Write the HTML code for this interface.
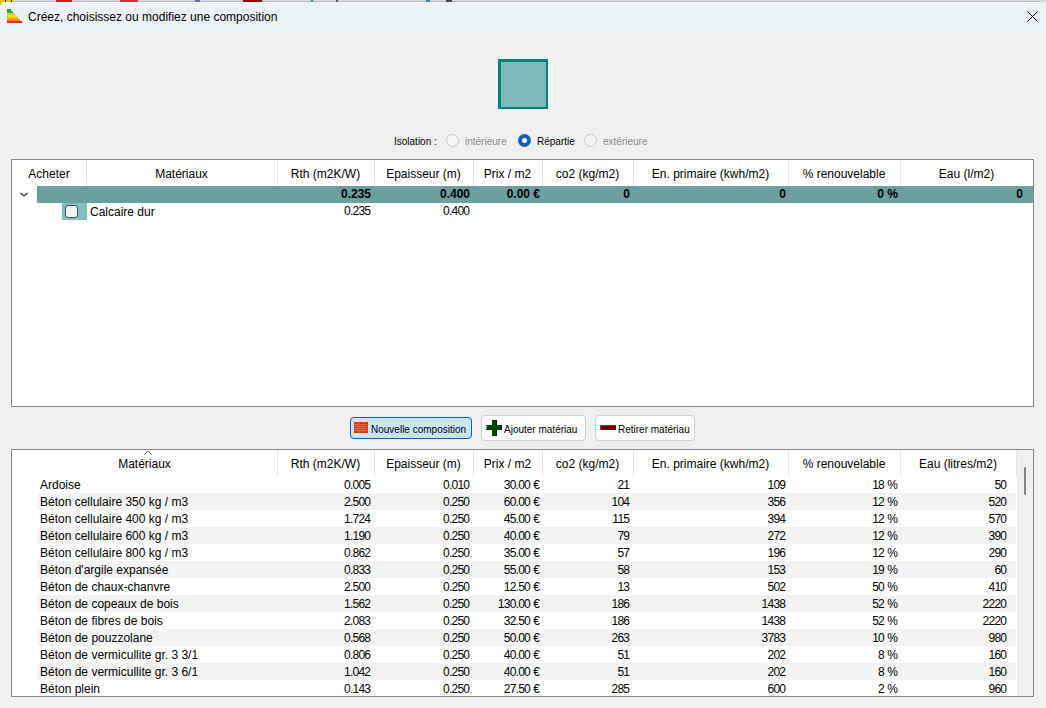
<!DOCTYPE html>
<html><head><meta charset="utf-8">
<style>
html,body{margin:0;padding:0;}
body{width:1046px;height:708px;overflow:hidden;position:relative;background:#f0f0f0;font-family:"Liberation Sans",sans-serif;font-size:12px;color:#000;}
.a{position:absolute;}
.t{position:absolute;white-space:nowrap;}
.r{text-align:right;}
.c{text-align:center;}
.b{font-weight:bold;}
.n{letter-spacing:-0.75px;}
.sm{font-size:10px;}
.dis{color:#8a8a8a;}
.bt{}
.sep{position:absolute;width:1px;background:#e5e5e5;}
</style></head><body>

<div class="a" style="left:0;top:0;width:1046px;height:2px;background:#d9d9d9"></div>
<div class="a" style="left:0;top:1px;width:1040px;height:1px;background:#b9b9b9"></div>
<div class="a" style="left:0px;top:0;width:13px;height:2px;background:#e8c200"></div>
<div class="a" style="left:5px;top:0;width:1px;height:2px;background:#222"></div>
<div class="a" style="left:11px;top:0;width:1px;height:2px;background:#333"></div>
<div class="a" style="left:56px;top:0;width:16px;height:2px;background:#d42020"></div>
<div class="a" style="left:120px;top:0;width:18px;height:2px;background:#d83030"></div>
<div class="a" style="left:195px;top:0;width:5px;height:2px;background:#5a6fb8"></div>
<div class="a" style="left:243px;top:0;width:19px;height:2px;background:#8a0a0a"></div>
<div class="a" style="left:311px;top:0;width:2px;height:2px;background:#3a7ad0"></div>
<div class="a" style="left:336px;top:0;width:2px;height:2px;background:#555"></div>
<div class="a" style="left:426px;top:0;width:4px;height:2px;background:#3a7ad0"></div>
<div class="a" style="left:446px;top:0;width:6px;height:2px;background:#444"></div>
<div class="a" style="left:0;top:2px;width:2px;height:3px;background:#e8c200"></div>
<div class="a" style="left:0;top:2px;width:1046px;height:30px;background:#ebf3f7;border-top-right-radius:8px;border-top-left-radius:6px"></div>
<div class="a" style="left:4px;top:2px;width:1036px;height:1px;background:#f3fafd"></div>
<div class="a" style="left:7px;top:9px;width:4px;height:2px;background:#2e8f38"></div>
<div class="a" style="left:7px;top:11px;width:6px;height:2px;background:#3cb043"></div>
<div class="a" style="left:7px;top:13px;width:8px;height:2px;background:#b9dc3c"></div>
<div class="a" style="left:7px;top:15px;width:10px;height:2px;background:#f6e200"></div>
<div class="a" style="left:7px;top:17px;width:11px;height:2px;background:#f8b61c"></div>
<div class="a" style="left:7px;top:19px;width:13px;height:2px;background:#f5861f"></div>
<div class="a" style="left:7px;top:21px;width:15px;height:2px;background:#ec2622"></div>
<div class="t " style="left:28px;top:7px;height:20px;line-height:20px">Créez, choisissez ou modifiez une composition</div>
<svg class="a" style="left:1022px;top:6px" width="20" height="20" viewBox="0 0 20 20"><path d="M5.5 5.5 L15.5 15.5 M15.5 5.5 L5.5 15.5" stroke="#000" stroke-width="1" fill="none"/></svg>
<div class="a" style="left:498px;top:59px;width:45px;height:45px;background:#7fb8b8;border-style:solid;border-color:#007f7f;border-width:3px 2px 2px 3px"></div>
<div class="t sm" style="left:394px;top:134px;height:16px;line-height:16px">Isolation :</div>
<div class="a" style="left:446px;top:134px;width:11px;height:11px;border-radius:50%;background:#f5f5f5;border:1px solid #c8c8c8"></div>
<div class="t sm dis" style="left:465px;top:134px;height:16px;line-height:16px">intérieure</div>
<div class="a" style="left:518px;top:134px;width:13px;height:13px;border-radius:50%;background:#0f5fb3"></div><div class="a" style="left:522px;top:138px;width:5px;height:5px;border-radius:50%;background:#fff"></div>
<div class="t sm" style="left:537px;top:134px;height:16px;line-height:16px">Répartie</div>
<div class="a" style="left:584px;top:134px;width:11px;height:11px;border-radius:50%;background:#f5f5f5;border:1px solid #c8c8c8"></div>
<div class="t sm dis" style="left:603px;top:134px;height:16px;line-height:16px">extérieure</div>
<div class="a" style="left:11px;top:159px;width:1021px;height:246px;border:1px solid #838790;background:#fff"></div>
<div class="sep" style="left:86px;top:160px;height:26px"></div>
<div class="sep" style="left:277px;top:160px;height:26px"></div>
<div class="sep" style="left:374px;top:160px;height:26px"></div>
<div class="sep" style="left:473px;top:160px;height:26px"></div>
<div class="sep" style="left:542px;top:160px;height:26px"></div>
<div class="sep" style="left:633px;top:160px;height:26px"></div>
<div class="sep" style="left:788px;top:160px;height:26px"></div>
<div class="sep" style="left:900px;top:160px;height:26px"></div>
<div class="t c " style="left:12px;top:161px;width:74px;height:26px;line-height:26px">Acheter</div>
<div class="t c " style="left:86px;top:161px;width:191px;height:26px;line-height:26px">Matériaux</div>
<div class="t c " style="left:277px;top:161px;width:97px;height:26px;line-height:26px">Rth (m2K/W)</div>
<div class="t c " style="left:374px;top:161px;width:99px;height:26px;line-height:26px">Epaisseur (m)</div>
<div class="t c " style="left:473px;top:161px;width:69px;height:26px;line-height:26px">Prix / m2</div>
<div class="t c " style="left:542px;top:161px;width:91px;height:26px;line-height:26px">co2 (kg/m2)</div>
<div class="t c " style="left:633px;top:161px;width:155px;height:26px;line-height:26px">En. primaire (kwh/m2)</div>
<div class="t c " style="left:788px;top:161px;width:112px;height:26px;line-height:26px">% renouvelable</div>
<div class="t c " style="left:900px;top:161px;width:133px;height:26px;line-height:26px">Eau (l/m2)</div>
<div class="a" style="left:37px;top:186px;width:996px;height:17px;background:#6c9f9f"></div>
<svg class="a" style="left:18px;top:189px" width="12" height="10" viewBox="0 0 12 10"><path d="M2.3 4 L6 6.9 L9.7 4" stroke="#1a1a1a" stroke-width="1.1" fill="none"/></svg>
<div class="t r b" style="left:171px;top:186px;width:200px;height:17px;line-height:17px">0.235</div>
<div class="t r b" style="left:270px;top:186px;width:200px;height:17px;line-height:17px">0.400</div>
<div class="t r b" style="left:340px;top:186px;width:200px;height:17px;line-height:17px">0.00 €</div>
<div class="t r b" style="left:430px;top:186px;width:200px;height:17px;line-height:17px">0</div>
<div class="t r b" style="left:586px;top:186px;width:200px;height:17px;line-height:17px">0</div>
<div class="t r b" style="left:698px;top:186px;width:200px;height:17px;line-height:17px">0 %</div>
<div class="t r b" style="left:823px;top:186px;width:200px;height:17px;line-height:17px">0</div>
<div class="a" style="left:62px;top:203px;width:25px;height:17px;background:#80bfbf"></div>
<div class="a" style="left:65px;top:205px;width:11px;height:11px;background:#f3f3f3;border:1px solid #4a4a4a;border-radius:3px"></div>
<div class="t " style="left:90px;top:204px;height:17px;line-height:17px">Calcaire dur</div>
<div class="t r " style="left:170.25px;top:203px;width:200px;height:17px;line-height:17px"><span class="n">0.235</span></div>
<div class="t r " style="left:269.25px;top:203px;width:200px;height:17px;line-height:17px"><span class="n">0.400</span></div>
<div class="a" style="left:350px;top:417px;width:120px;height:20px;border:1px solid #0b5cad;border-radius:4px;background:#cce4f7"></div>
<svg class="a" style="left:354px;top:422px" width="14" height="11" viewBox="0 0 14 11"><rect x="0" y="0" width="14" height="11" fill="#d23a18"/><rect x="0.25" y="0.25" width="13.5" height="10.5" fill="none" stroke="#a04a30" stroke-width="0.5"/><path d="M0.5 2.5H13.5M0.5 4.5H13.5M0.5 6.5H13.5M0.5 8.5H13.5" stroke="#ec8a68" stroke-width="0.55"/><path d="M5 0.5V2.5M10 0.5V2.5M3 2.5V4.5M8 2.5V4.5M5 4.5V6.5M10 4.5V6.5M3 6.5V8.5M8 6.5V8.5M5 8.5V10.5M10 8.5V10.5" stroke="#e89070" stroke-width="0.5"/></svg>
<div class="t sm bt" style="left:371px;top:422px;height:16px;line-height:16px">Nouvelle composition</div>
<div class="a" style="left:481px;top:415px;width:103px;height:24px;border:1px solid #d0d0d0;border-radius:4px;background:#fdfdfd"></div>
<svg class="a" style="left:486px;top:420px" width="17" height="17" viewBox="0 0 17 17" shape-rendering="crispEdges"><path d="M6 0H11V5H16V10H11V16H6V10H0V5H6Z" fill="#004a00"/><rect x="10" y="0" width="1" height="5" fill="#001a00"/><rect x="10" y="10" width="1" height="6" fill="#001a00"/><rect x="15" y="5" width="1" height="5" fill="#002400"/><rect x="0" y="5" width="1" height="5" fill="#22d022"/><rect x="0" y="9" width="6" height="1" fill="#102010"/></svg>
<div class="t sm bt" style="left:504px;top:422px;height:16px;line-height:16px">Ajouter matériau</div>
<div class="a" style="left:595px;top:415px;width:98px;height:24px;border:1px solid #d0d0d0;border-radius:4px;background:#fdfdfd"></div>
<svg class="a" style="left:600px;top:425px" width="16" height="5" viewBox="0 0 16 5" shape-rendering="crispEdges"><rect width="16" height="5" fill="#760000"/><rect x="0" y="0" width="16" height="1" fill="#b02020"/><rect x="0" y="0" width="2" height="5" fill="#e01010"/><rect x="1" y="1" width="14" height="3" fill="#6a0000"/></svg>
<div class="t sm bt" style="left:618px;top:422px;height:16px;line-height:16px">Retirer matériau</div>
<div class="a" style="left:11px;top:449px;width:1021px;height:246px;border:1px solid #838790;background:#fff"></div>
<div class="sep" style="left:277px;top:450px;height:26px"></div>
<div class="sep" style="left:374px;top:450px;height:26px"></div>
<div class="sep" style="left:473px;top:450px;height:26px"></div>
<div class="sep" style="left:542px;top:450px;height:26px"></div>
<div class="sep" style="left:633px;top:450px;height:26px"></div>
<div class="sep" style="left:788px;top:450px;height:26px"></div>
<div class="sep" style="left:900px;top:450px;height:26px"></div>
<div class="sep" style="left:1016px;top:450px;height:26px"></div>
<div class="t c " style="left:12px;top:451px;width:265px;height:26px;line-height:26px">Matériaux</div>
<div class="t c " style="left:277px;top:451px;width:97px;height:26px;line-height:26px">Rth (m2K/W)</div>
<div class="t c " style="left:374px;top:451px;width:99px;height:26px;line-height:26px">Epaisseur (m)</div>
<div class="t c " style="left:473px;top:451px;width:69px;height:26px;line-height:26px">Prix / m2</div>
<div class="t c " style="left:542px;top:451px;width:91px;height:26px;line-height:26px">co2 (kg/m2)</div>
<div class="t c " style="left:633px;top:451px;width:155px;height:26px;line-height:26px">En. primaire (kwh/m2)</div>
<div class="t c " style="left:788px;top:451px;width:112px;height:26px;line-height:26px">% renouvelable</div>
<div class="t c " style="left:900px;top:451px;width:116px;height:26px;line-height:26px">Eau (litres/m2)</div>
<svg class="a" style="left:142px;top:449px" width="12" height="8" viewBox="0 0 12 8"><path d="M2.5 5.5 L6 2 L9.5 5.5" stroke="#666" stroke-width="1" fill="none"/></svg>
<div class="t " style="left:40px;top:477px;height:17px;line-height:17px">Ardoise</div>
<div class="t r " style="left:170.25px;top:477px;width:200px;height:17px;line-height:17px"><span class="n">0.005</span></div>
<div class="t r " style="left:269.25px;top:477px;width:200px;height:17px;line-height:17px"><span class="n">0.010</span></div>
<div class="t r " style="left:340px;top:477px;width:200px;height:17px;line-height:17px"><span class="n">30.00</span> €</div>
<div class="t r " style="left:429.25px;top:477px;width:200px;height:17px;line-height:17px"><span class="n">21</span></div>
<div class="t r " style="left:585.25px;top:477px;width:200px;height:17px;line-height:17px"><span class="n">109</span></div>
<div class="t r " style="left:698px;top:477px;width:200px;height:17px;line-height:17px"><span class="n">18</span> %</div>
<div class="t r " style="left:806.25px;top:477px;width:200px;height:17px;line-height:17px"><span class="n">50</span></div>
<div class="a" style="left:37px;top:493px;width:979px;height:17px;background:#f3f3f3"></div>
<div class="t " style="left:40px;top:494px;height:17px;line-height:17px">Béton cellulaire 350 kg / m3</div>
<div class="t r " style="left:170.25px;top:494px;width:200px;height:17px;line-height:17px"><span class="n">2.500</span></div>
<div class="t r " style="left:269.25px;top:494px;width:200px;height:17px;line-height:17px"><span class="n">0.250</span></div>
<div class="t r " style="left:340px;top:494px;width:200px;height:17px;line-height:17px"><span class="n">60.00</span> €</div>
<div class="t r " style="left:429.25px;top:494px;width:200px;height:17px;line-height:17px"><span class="n">104</span></div>
<div class="t r " style="left:585.25px;top:494px;width:200px;height:17px;line-height:17px"><span class="n">356</span></div>
<div class="t r " style="left:698px;top:494px;width:200px;height:17px;line-height:17px"><span class="n">12</span> %</div>
<div class="t r " style="left:806.25px;top:494px;width:200px;height:17px;line-height:17px"><span class="n">520</span></div>
<div class="t " style="left:40px;top:511px;height:17px;line-height:17px">Béton cellulaire 400 kg / m3</div>
<div class="t r " style="left:170.25px;top:511px;width:200px;height:17px;line-height:17px"><span class="n">1.724</span></div>
<div class="t r " style="left:269.25px;top:511px;width:200px;height:17px;line-height:17px"><span class="n">0.250</span></div>
<div class="t r " style="left:340px;top:511px;width:200px;height:17px;line-height:17px"><span class="n">45.00</span> €</div>
<div class="t r " style="left:429.25px;top:511px;width:200px;height:17px;line-height:17px"><span class="n">115</span></div>
<div class="t r " style="left:585.25px;top:511px;width:200px;height:17px;line-height:17px"><span class="n">394</span></div>
<div class="t r " style="left:698px;top:511px;width:200px;height:17px;line-height:17px"><span class="n">12</span> %</div>
<div class="t r " style="left:806.25px;top:511px;width:200px;height:17px;line-height:17px"><span class="n">570</span></div>
<div class="a" style="left:37px;top:527px;width:979px;height:17px;background:#f3f3f3"></div>
<div class="t " style="left:40px;top:528px;height:17px;line-height:17px">Béton cellulaire 600 kg / m3</div>
<div class="t r " style="left:170.25px;top:528px;width:200px;height:17px;line-height:17px"><span class="n">1.190</span></div>
<div class="t r " style="left:269.25px;top:528px;width:200px;height:17px;line-height:17px"><span class="n">0.250</span></div>
<div class="t r " style="left:340px;top:528px;width:200px;height:17px;line-height:17px"><span class="n">40.00</span> €</div>
<div class="t r " style="left:429.25px;top:528px;width:200px;height:17px;line-height:17px"><span class="n">79</span></div>
<div class="t r " style="left:585.25px;top:528px;width:200px;height:17px;line-height:17px"><span class="n">272</span></div>
<div class="t r " style="left:698px;top:528px;width:200px;height:17px;line-height:17px"><span class="n">12</span> %</div>
<div class="t r " style="left:806.25px;top:528px;width:200px;height:17px;line-height:17px"><span class="n">390</span></div>
<div class="t " style="left:40px;top:545px;height:17px;line-height:17px">Béton cellulaire 800 kg / m3</div>
<div class="t r " style="left:170.25px;top:545px;width:200px;height:17px;line-height:17px"><span class="n">0.862</span></div>
<div class="t r " style="left:269.25px;top:545px;width:200px;height:17px;line-height:17px"><span class="n">0.250</span></div>
<div class="t r " style="left:340px;top:545px;width:200px;height:17px;line-height:17px"><span class="n">35.00</span> €</div>
<div class="t r " style="left:429.25px;top:545px;width:200px;height:17px;line-height:17px"><span class="n">57</span></div>
<div class="t r " style="left:585.25px;top:545px;width:200px;height:17px;line-height:17px"><span class="n">196</span></div>
<div class="t r " style="left:698px;top:545px;width:200px;height:17px;line-height:17px"><span class="n">12</span> %</div>
<div class="t r " style="left:806.25px;top:545px;width:200px;height:17px;line-height:17px"><span class="n">290</span></div>
<div class="a" style="left:37px;top:561px;width:979px;height:17px;background:#f3f3f3"></div>
<div class="t " style="left:40px;top:562px;height:17px;line-height:17px">Béton d'argile expansée</div>
<div class="t r " style="left:170.25px;top:562px;width:200px;height:17px;line-height:17px"><span class="n">0.833</span></div>
<div class="t r " style="left:269.25px;top:562px;width:200px;height:17px;line-height:17px"><span class="n">0.250</span></div>
<div class="t r " style="left:340px;top:562px;width:200px;height:17px;line-height:17px"><span class="n">55.00</span> €</div>
<div class="t r " style="left:429.25px;top:562px;width:200px;height:17px;line-height:17px"><span class="n">58</span></div>
<div class="t r " style="left:585.25px;top:562px;width:200px;height:17px;line-height:17px"><span class="n">153</span></div>
<div class="t r " style="left:698px;top:562px;width:200px;height:17px;line-height:17px"><span class="n">19</span> %</div>
<div class="t r " style="left:806.25px;top:562px;width:200px;height:17px;line-height:17px"><span class="n">60</span></div>
<div class="t " style="left:40px;top:579px;height:17px;line-height:17px">Béton de chaux-chanvre</div>
<div class="t r " style="left:170.25px;top:579px;width:200px;height:17px;line-height:17px"><span class="n">2.500</span></div>
<div class="t r " style="left:269.25px;top:579px;width:200px;height:17px;line-height:17px"><span class="n">0.250</span></div>
<div class="t r " style="left:340px;top:579px;width:200px;height:17px;line-height:17px"><span class="n">12.50</span> €</div>
<div class="t r " style="left:429.25px;top:579px;width:200px;height:17px;line-height:17px"><span class="n">13</span></div>
<div class="t r " style="left:585.25px;top:579px;width:200px;height:17px;line-height:17px"><span class="n">502</span></div>
<div class="t r " style="left:698px;top:579px;width:200px;height:17px;line-height:17px"><span class="n">50</span> %</div>
<div class="t r " style="left:806.25px;top:579px;width:200px;height:17px;line-height:17px"><span class="n">410</span></div>
<div class="a" style="left:37px;top:595px;width:979px;height:17px;background:#f3f3f3"></div>
<div class="t " style="left:40px;top:596px;height:17px;line-height:17px">Béton de copeaux de bois</div>
<div class="t r " style="left:170.25px;top:596px;width:200px;height:17px;line-height:17px"><span class="n">1.562</span></div>
<div class="t r " style="left:269.25px;top:596px;width:200px;height:17px;line-height:17px"><span class="n">0.250</span></div>
<div class="t r " style="left:340px;top:596px;width:200px;height:17px;line-height:17px"><span class="n">130.00</span> €</div>
<div class="t r " style="left:429.25px;top:596px;width:200px;height:17px;line-height:17px"><span class="n">186</span></div>
<div class="t r " style="left:585.25px;top:596px;width:200px;height:17px;line-height:17px"><span class="n">1438</span></div>
<div class="t r " style="left:698px;top:596px;width:200px;height:17px;line-height:17px"><span class="n">52</span> %</div>
<div class="t r " style="left:806.25px;top:596px;width:200px;height:17px;line-height:17px"><span class="n">2220</span></div>
<div class="t " style="left:40px;top:613px;height:17px;line-height:17px">Béton de fibres de bois</div>
<div class="t r " style="left:170.25px;top:613px;width:200px;height:17px;line-height:17px"><span class="n">2.083</span></div>
<div class="t r " style="left:269.25px;top:613px;width:200px;height:17px;line-height:17px"><span class="n">0.250</span></div>
<div class="t r " style="left:340px;top:613px;width:200px;height:17px;line-height:17px"><span class="n">32.50</span> €</div>
<div class="t r " style="left:429.25px;top:613px;width:200px;height:17px;line-height:17px"><span class="n">186</span></div>
<div class="t r " style="left:585.25px;top:613px;width:200px;height:17px;line-height:17px"><span class="n">1438</span></div>
<div class="t r " style="left:698px;top:613px;width:200px;height:17px;line-height:17px"><span class="n">52</span> %</div>
<div class="t r " style="left:806.25px;top:613px;width:200px;height:17px;line-height:17px"><span class="n">2220</span></div>
<div class="a" style="left:37px;top:629px;width:979px;height:17px;background:#f3f3f3"></div>
<div class="t " style="left:40px;top:630px;height:17px;line-height:17px">Béton de pouzzolane</div>
<div class="t r " style="left:170.25px;top:630px;width:200px;height:17px;line-height:17px"><span class="n">0.568</span></div>
<div class="t r " style="left:269.25px;top:630px;width:200px;height:17px;line-height:17px"><span class="n">0.250</span></div>
<div class="t r " style="left:340px;top:630px;width:200px;height:17px;line-height:17px"><span class="n">50.00</span> €</div>
<div class="t r " style="left:429.25px;top:630px;width:200px;height:17px;line-height:17px"><span class="n">263</span></div>
<div class="t r " style="left:585.25px;top:630px;width:200px;height:17px;line-height:17px"><span class="n">3783</span></div>
<div class="t r " style="left:698px;top:630px;width:200px;height:17px;line-height:17px"><span class="n">10</span> %</div>
<div class="t r " style="left:806.25px;top:630px;width:200px;height:17px;line-height:17px"><span class="n">980</span></div>
<div class="t " style="left:40px;top:647px;height:17px;line-height:17px">Béton de vermicullite gr. 3 3/1</div>
<div class="t r " style="left:170.25px;top:647px;width:200px;height:17px;line-height:17px"><span class="n">0.806</span></div>
<div class="t r " style="left:269.25px;top:647px;width:200px;height:17px;line-height:17px"><span class="n">0.250</span></div>
<div class="t r " style="left:340px;top:647px;width:200px;height:17px;line-height:17px"><span class="n">40.00</span> €</div>
<div class="t r " style="left:429.25px;top:647px;width:200px;height:17px;line-height:17px"><span class="n">51</span></div>
<div class="t r " style="left:585.25px;top:647px;width:200px;height:17px;line-height:17px"><span class="n">202</span></div>
<div class="t r " style="left:698px;top:647px;width:200px;height:17px;line-height:17px"><span class="n">8</span> %</div>
<div class="t r " style="left:806.25px;top:647px;width:200px;height:17px;line-height:17px"><span class="n">160</span></div>
<div class="a" style="left:37px;top:663px;width:979px;height:17px;background:#f3f3f3"></div>
<div class="t " style="left:40px;top:664px;height:17px;line-height:17px">Béton de vermicullite gr. 3 6/1</div>
<div class="t r " style="left:170.25px;top:664px;width:200px;height:17px;line-height:17px"><span class="n">1.042</span></div>
<div class="t r " style="left:269.25px;top:664px;width:200px;height:17px;line-height:17px"><span class="n">0.250</span></div>
<div class="t r " style="left:340px;top:664px;width:200px;height:17px;line-height:17px"><span class="n">40.00</span> €</div>
<div class="t r " style="left:429.25px;top:664px;width:200px;height:17px;line-height:17px"><span class="n">51</span></div>
<div class="t r " style="left:585.25px;top:664px;width:200px;height:17px;line-height:17px"><span class="n">202</span></div>
<div class="t r " style="left:698px;top:664px;width:200px;height:17px;line-height:17px"><span class="n">8</span> %</div>
<div class="t r " style="left:806.25px;top:664px;width:200px;height:17px;line-height:17px"><span class="n">160</span></div>
<div class="t " style="left:40px;top:681px;height:17px;line-height:17px">Béton plein</div>
<div class="t r " style="left:170.25px;top:681px;width:200px;height:17px;line-height:17px"><span class="n">0.143</span></div>
<div class="t r " style="left:269.25px;top:681px;width:200px;height:17px;line-height:17px"><span class="n">0.250</span></div>
<div class="t r " style="left:340px;top:681px;width:200px;height:17px;line-height:17px"><span class="n">27.50</span> €</div>
<div class="t r " style="left:429.25px;top:681px;width:200px;height:17px;line-height:17px"><span class="n">285</span></div>
<div class="t r " style="left:585.25px;top:681px;width:200px;height:17px;line-height:17px"><span class="n">600</span></div>
<div class="t r " style="left:698px;top:681px;width:200px;height:17px;line-height:17px"><span class="n">2</span> %</div>
<div class="t r " style="left:806.25px;top:681px;width:200px;height:17px;line-height:17px"><span class="n">960</span></div>
<div class="a" style="left:1017px;top:450px;width:16px;height:246px;background:#f0f0f0"></div>
<div class="a" style="left:1024px;top:467px;width:2px;height:28px;border-radius:1px;background:#838383"></div>
</body></html>
